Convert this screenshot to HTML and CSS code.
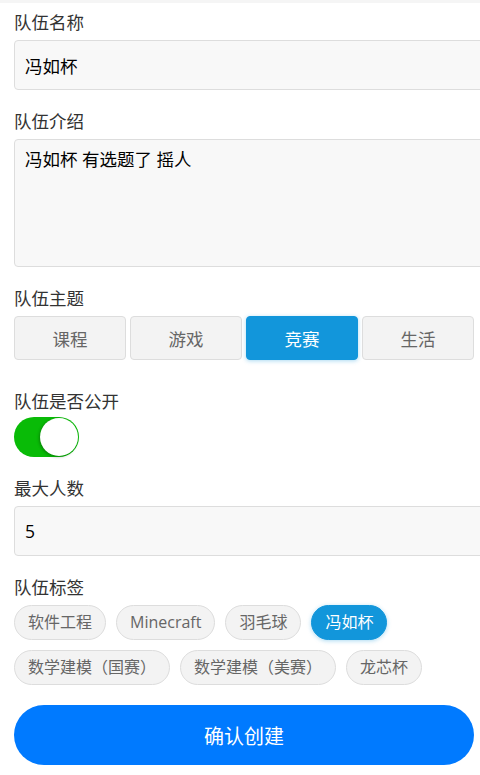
FILE: index.html
```html
<!DOCTYPE html>
<html lang="zh-CN">
<head>
    <meta charset="UTF-8">
    <meta name="viewport" content="width=device-width, initial-scale=1.0">
    <title>创建队伍</title>
    <link rel="stylesheet" href="styles.css">
</head>
<body>
    <div class="top-bar"></div>
    <form class="team-form">
        <div class="form-group">
            <label class="field-label" for="teamName">队伍名称</label>
            <input class="text-input" type="text" id="teamName" value="冯如杯">
        </div>
        <div class="form-group">
            <label class="field-label" for="teamIntro">队伍介绍</label>
            <textarea class="text-area" id="teamIntro">冯如杯 有选题了 摇人</textarea>
        </div>
        <div class="form-group theme-group">
            <div class="field-label">队伍主题</div>
            <div class="theme-options">
                <button type="button" class="theme-btn">课程</button>
                <button type="button" class="theme-btn">游戏</button>
                <button type="button" class="theme-btn active">竞赛</button>
                <button type="button" class="theme-btn">生活</button>
            </div>
        </div>
        <div class="form-group">
            <div class="field-label">队伍是否公开</div>
            <label class="switch">
                <input type="checkbox" checked>
                <span class="switch-track"><span class="switch-knob"></span></span>
            </label>
        </div>
        <div class="form-group">
            <label class="field-label" for="maxMembers">最大人数</label>
            <input class="text-input" type="number" id="maxMembers" value="5">
        </div>
        <div class="form-group">
            <div class="field-label">队伍标签</div>
            <div class="tag-list">
                <span class="tag">软件工程</span>
                <span class="tag">Minecraft</span>
                <span class="tag">羽毛球</span>
                <span class="tag active">冯如杯</span>
                <span class="tag">数学建模（国赛）</span>
                <span class="tag">数学建模（美赛）</span>
                <span class="tag">龙芯杯</span>
            </div>
        </div>
        <button type="button" class="submit-btn">确认创建</button>
    </form>
</body>
</html>
```

FILE: styles.css
```css
html, body {
    overflow-x: hidden;
}
body {
    margin: 0;
    font-family: "Open Sans", "Noto Sans CJK SC", sans-serif;
    color: #333;
    background-color: white;
}
.top-bar {
    height: 3px;
    background-color: #f5f5f5;
}
.team-form {
    padding: 7px 6px 20px 14px;
}
.form-group {
    margin-bottom: 19px;
}
.theme-group {
    margin-bottom: 29px;
}
.field-label {
    display: block;
    font-size: 17.5px;
    line-height: 24px;
    margin-bottom: 6px;
    color: #333;
}
.text-input,
.text-area {
    display: block;
    width: 100%;
    padding: 0 10px;
    border: 1px solid #ddd;
    border-radius: 4px;
    background-color: #f8f8f8;
    font-family: "Open Sans", "Noto Sans CJK SC", sans-serif;
    font-size: 17.5px;
    color: #000;
    outline: none;
}
.text-input {
    height: 48px;
}
.text-input::-webkit-inner-spin-button {
    -webkit-appearance: none;
}
.text-area {
    height: 112px;
    padding-top: 7px;
    padding-bottom: 7px;
    line-height: 24px;
    resize: none;
}
.theme-options {
    display: grid;
    grid-template-columns: repeat(4, 1fr);
    gap: 4px;
}
.theme-btn {
    height: 44px;
    border: 1px solid #ddd;
    border-radius: 4px;
    background-color: #f3f3f3;
    color: #666;
    font-family: "Open Sans", "Noto Sans CJK SC", sans-serif;
    font-size: 17.5px;
    padding: 0;
}
.theme-btn.active {
    background-color: #1296db;
    border-color: #1296db;
    color: white;
    box-shadow: 0 1px 4px rgba(18, 150, 219, 0.35);
}
.switch {
    display: block;
    width: 65px;
    margin-top: -2px;
}
.switch input {
    display: none;
}
.switch-track {
    display: flex;
    justify-content: flex-end;
    align-items: center;
    width: 65px;
    height: 40px;
    box-sizing: border-box;
    border-radius: 20px;
    background-color: #09bb07;
}
.switch-knob {
    width: 38px;
    height: 38px;
    margin-right: 1px;
    border-radius: 50%;
    background-color: white;
    box-shadow: -1px 1px 3px rgba(0, 0, 0, 0.3);
}
.tag-list {
    display: flex;
    flex-wrap: wrap;
    gap: 10px 10px;
}
.tag {
    height: 35px;
    box-sizing: border-box;
    padding: 0 13px;
    border: 1px solid #ddd;
    border-radius: 18px;
    background-color: #f3f3f3;
    color: #666;
    font-size: 16px;
    line-height: 33px;
}
.tag.active {
    background-color: #1296db;
    border-color: #1296db;
    color: white;
    box-shadow: 0 1px 4px rgba(18, 150, 219, 0.35);
}
.submit-btn {
    display: block;
    width: 100%;
    height: 60px;
    margin-top: 20px;
    border: none;
    border-radius: 30px;
    background-color: #007aff;
    color: white;
    font-family: "Open Sans", "Noto Sans CJK SC", sans-serif;
    font-size: 20px;
}
```
